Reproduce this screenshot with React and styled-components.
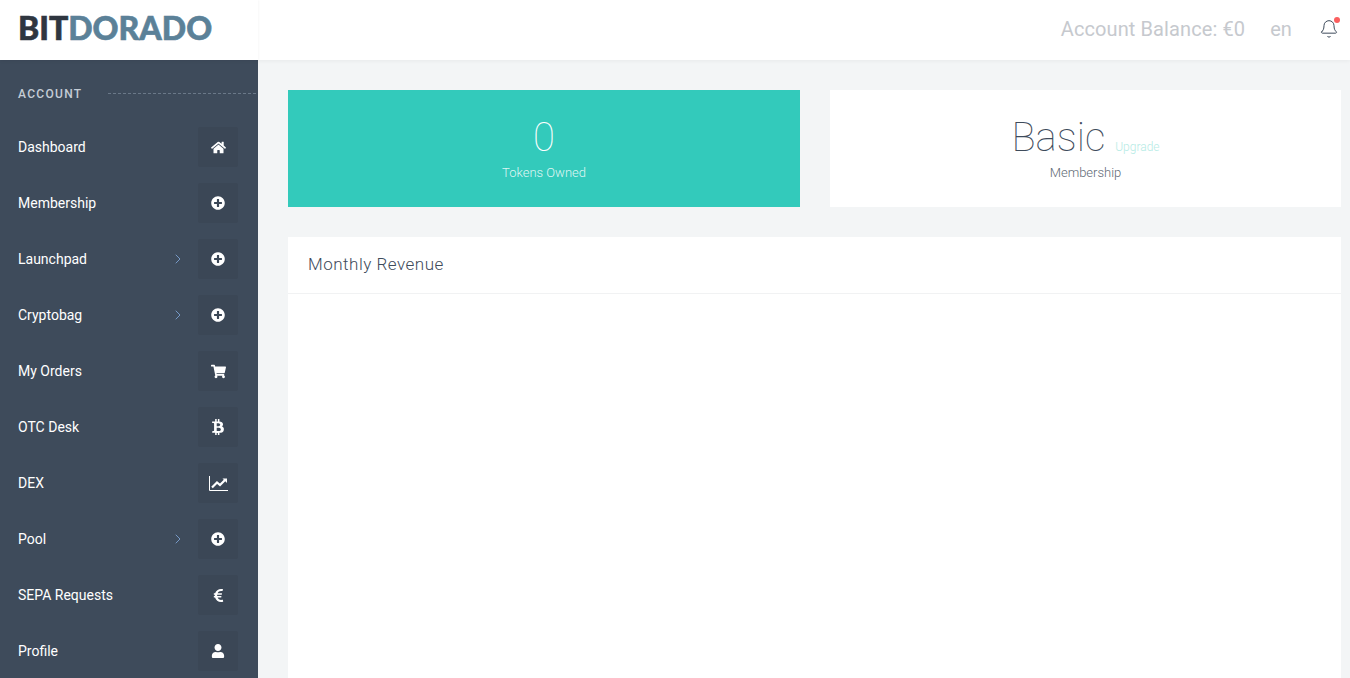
import styled, { createGlobalStyle } from 'styled-components';
import { FaHome, FaPlusCircle, FaShoppingCart, FaBtc, FaEuroSign, FaUser } from 'react-icons/fa';
import { ChevronRight, Bell } from 'lucide-react';

const GlobalStyle = createGlobalStyle`
  html, body {
    margin: 0;
    height: 100%;
    overflow: hidden;
    background: #f3f5f6;
    font-family: Roboto, "Liberation Sans", sans-serif;
  }
`;

// thin axis + zigzag, the solid one in the icon pack is too heavy
const LineChartIcon = () => (
  <svg width="19" height="15" viewBox="0 0 19 15" fill="none" stroke="#fff">
    <path d="M0.5 0v14.5H19" />
    <path d="M3 11.5l5-5 3 2.5 5.5-5.5" strokeWidth="2.2" />
    <path d="M13.5 2.5H18v4.5z" fill="#fff" stroke="none" />
  </svg>
);

const menu = [
  { label: 'Dashboard', icon: <FaHome size={15} /> },
  { label: 'Membership', icon: <FaPlusCircle size={14} /> },
  { label: 'Launchpad', icon: <FaPlusCircle size={14} />, sub: true },
  { label: 'Cryptobag', icon: <FaPlusCircle size={14} />, sub: true },
  { label: 'My Orders', icon: <FaShoppingCart size={15} /> },
  { label: 'OTC Desk', icon: <FaBtc size={16} /> },
  { label: 'DEX', icon: <LineChartIcon /> },
  { label: 'Pool', icon: <FaPlusCircle size={14} />, sub: true },
  { label: 'SEPA Requests', icon: <FaEuroSign size={15} /> },
  { label: 'Profile', icon: <FaUser size={14} /> },
];

export default function App() {
  return (
    <>
      <GlobalStyle />
      <Page>
        <TopBar>
          <LogoBox>
            <Logo>
              BIT<LogoAccent>DORADO</LogoAccent>
            </Logo>
          </LogoBox>
          <TopActions>
            <TopText>Account Balance: €0</TopText>
            <TopText>en</TopText>
            <BellWrap>
              <Bell size={20} strokeWidth={1.2} color="#3e4b5b" />
              <BellDot />
            </BellWrap>
          </TopActions>
        </TopBar>
        <Body>
          <Sidebar>
            <SectionTitle>Account</SectionTitle>
            {menu.map((item) => (
              <MenuItem key={item.label}>
                <MenuLabel>{item.label}</MenuLabel>
                {item.sub && (
                  <Arrow>
                    <ChevronRight size={16} strokeWidth={1.3} />
                  </Arrow>
                )}
                <IconBox>{item.icon}</IconBox>
              </MenuItem>
            ))}
          </Sidebar>
          <Main>
            <CardRow>
              <StatCard $accent>
                <StatValue>0</StatValue>
                <StatLabel>Tokens Owned</StatLabel>
              </StatCard>
              <StatCard>
                <StatValue $dark>
                  Basic<UpgradeLink>Upgrade</UpgradeLink>
                </StatValue>
                <StatLabel $dark>Membership</StatLabel>
              </StatCard>
            </CardRow>
            <Panel>
              <PanelHeader>Monthly Revenue</PanelHeader>
            </Panel>
          </Main>
        </Body>
      </Page>
    </>
  );
}

const Page = styled.div`
  height: 678px;
  display: flex;
  flex-direction: column;
  overflow: hidden;
`;

const TopBar = styled.header`
  position: relative;
  z-index: 2;
  flex: 0 0 60px;
  display: flex;
  align-items: center;
  justify-content: space-between;
  background: #fff;
  box-shadow: 0 1px 4px rgba(0, 0, 0, 0.05);
`;

const LogoBox = styled.div`
  width: 258px;
  height: 100%;
  padding-left: 18px;
  box-sizing: border-box;
  display: flex;
  align-items: center;
  box-shadow: 1px 0 2px rgba(0, 0, 0, 0.03);
`;

const Logo = styled.div`
  font-family: Lato, "Liberation Sans", sans-serif;
  font-weight: 900;
  font-size: 32px;
  line-height: 1;
  color: #2f3640;
  -webkit-text-stroke: 0.6px currentColor;
  margin-top: -5px;
`;

const LogoAccent = styled.span`
  color: #5b8198;
`;

const TopActions = styled.div`
  display: flex;
  align-items: center;
  gap: 25px;
  padding-right: 11px;
  margin-top: -3px;
`;

const TopText = styled.span`
  font-size: 20px;
  font-weight: 400;
  letter-spacing: 0.1px;
  color: #c6c9ce;
`;

const BellWrap = styled.div`
  position: relative;
  display: flex;
  margin-left: 2px;
`;

const BellDot = styled.span`
  position: absolute;
  top: -2px;
  right: -1px;
  width: 6px;
  height: 6px;
  border-radius: 50%;
  background: #fb5f5f;
`;

const Body = styled.div`
  flex: 1;
  display: flex;
  min-height: 0;
`;

const Sidebar = styled.nav`
  flex: 0 0 258px;
  background: #3e4b5b;
  padding: 0 20px 0 18px;
  box-sizing: border-box;
`;

const SectionTitle = styled.div`
  display: flex;
  align-items: center;
  height: 67px;
  margin-right: -18px;
  font-size: 12px;
  font-weight: 500;
  letter-spacing: 1.3px;
  text-transform: uppercase;
  color: #c5cdd6;

  &::after {
    content: '';
    flex: 1;
    margin-left: 26px;
    border-top: 1px dashed #6a7888;
  }
`;

const MenuItem = styled.div`
  display: flex;
  align-items: center;
  height: 40px;
  margin-bottom: 16px;
`;

const MenuLabel = styled.span`
  flex: 1;
  font-size: 14px;
  color: #fff;
`;

const Arrow = styled.span`
  display: flex;
  color: #7fa6d8;
  margin-right: 12px;
`;

const IconBox = styled.span`
  flex: 0 0 40px;
  height: 40px;
  display: flex;
  align-items: center;
  justify-content: center;
  border-radius: 2px;
  background: #3b4756;
  color: #fff;
`;

const Main = styled.main`
  flex: 1;
  min-width: 0;
  padding: 30px 9px 0 30px;
`;

const CardRow = styled.div`
  display: grid;
  grid-template-columns: 512px 511px;
  column-gap: 30px;
  margin-bottom: 30px;
`;

const StatCard = styled.section`
  height: 117px;
  display: flex;
  flex-direction: column;
  align-items: center;
  padding-top: 24px;
  box-sizing: border-box;
  background: ${(p) => (p.$accent ? '#33cabb' : '#fff')};
`;

const StatValue = styled.div`
  font-size: 40px;
  font-weight: 100;
  line-height: 48px;
  color: ${(p) => (p.$dark ? '#3e4b5b' : '#fff')};
`;

const UpgradeLink = styled.span`
  margin-left: 10px;
  font-size: 12px;
  font-weight: 300;
  line-height: 1;
  color: #b5ebe5;
`;

const StatLabel = styled.div`
  margin-top: 2px;
  font-size: 13px;
  font-weight: 300;
  line-height: 17px;
  color: ${(p) => (p.$dark ? '#616a75' : 'rgba(255, 255, 255, 0.85)')};
`;

const Panel = styled.section`
  width: 1053px;
  height: 460px;
  background: #fff;
`;

const PanelHeader = styled.div`
  height: 54px;
  padding: 0 20px 2px;
  display: flex;
  align-items: center;
  border-bottom: 1px solid #f1f2f3;
  font-size: 17px;
  font-weight: 300;
  letter-spacing: 0.5px;
  color: #3e4b5b;
`;
